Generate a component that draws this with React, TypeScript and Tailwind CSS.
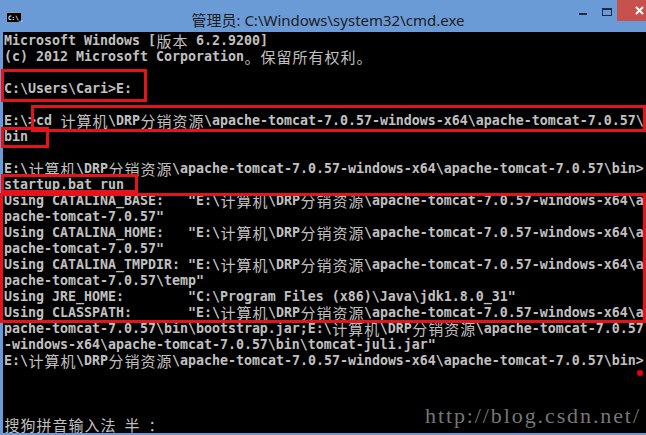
const LINES: string[] = [
  String.raw`Microsoft Windows [版本 6.2.9200]`,
  String.raw`(c) 2012 Microsoft Corporation。保留所有权利。`,
  ``,
  String.raw`C:\Users\Cari>E:`,
  ``,
  String.raw`E:\>cd 计算机\DRP分销资源\apache-tomcat-7.0.57-windows-x64\apache-tomcat-7.0.57` + "\\",
  `bin`,
  ``,
  String.raw`E:\计算机\DRP分销资源\apache-tomcat-7.0.57-windows-x64\apache-tomcat-7.0.57\bin>`,
  `startup.bat run`,
  String.raw`Using CATALINA_BASE:   "E:\计算机\DRP分销资源\apache-tomcat-7.0.57-windows-x64\a`,
  String.raw`pache-tomcat-7.0.57"`,
  String.raw`Using CATALINA_HOME:   "E:\计算机\DRP分销资源\apache-tomcat-7.0.57-windows-x64\a`,
  String.raw`pache-tomcat-7.0.57"`,
  String.raw`Using CATALINA_TMPDIR: "E:\计算机\DRP分销资源\apache-tomcat-7.0.57-windows-x64\a`,
  String.raw`pache-tomcat-7.0.57\temp"`,
  String.raw`Using JRE_HOME:        "C:\Program Files (x86)\Java\jdk1.8.0_31"`,
  String.raw`Using CLASSPATH:       "E:\计算机\DRP分销资源\apache-tomcat-7.0.57-windows-x64\a`,
  String.raw`pache-tomcat-7.0.57\bin\bootstrap.jar;E:\计算机\DRP分销资源\apache-tomcat-7.0.57`,
  String.raw`-windows-x64\apache-tomcat-7.0.57\bin\tomcat-juli.jar"`,
  String.raw`E:\计算机\DRP分销资源\apache-tomcat-7.0.57-windows-x64\apache-tomcat-7.0.57\bin>`,
  ``,
  ``,
  ``,
  `搜狗拼音输入法 半 ：`,
];

// full-width chars take two console cells (16px), the rest one (8px)
const isWide = (ch: string) => ch.charCodeAt(0) > 0x2e7f;

function ConsoleLine({ text }: { text: string }) {
  const runs: { wide: boolean; s: string }[] = [];
  for (const ch of text) {
    const wide = isWide(ch);
    const last = runs[runs.length - 1];
    if (last && last.wide === wide) last.s += ch;
    else runs.push({ wide, s: ch });
  }

  return (
    <div className="flex h-4 items-center whitespace-pre">
      {runs.map((run, i) =>
        run.wide ? (
          Array.from(run.s).map((ch, j) => (
            <span
              key={`${i}-${j}`}
              className="inline-block w-4 text-center font-['Noto_Sans_CJK_SC',sans-serif] text-[15px] leading-4 font-normal text-[#c0c0c0]"
            >
              {ch}
            </span>
          ))
        ) : (
          <span
            key={i}
            className="font-['DejaVu_Sans_Mono',monospace] text-[13.29px] leading-4 font-bold text-[#c0c0c0]"
          >
            {run.s}
          </span>
        )
      )}
    </div>
  );
}

function TitleBar() {
  return (
    <div className="flex h-8 items-start bg-[#6b9bd7]">
      <div className="w-[70px] pt-[12px] pl-[7px]">
        <div className="flex h-[10px] w-[14px] items-center border-t border-[#9a9a9a] bg-black pl-[1px]">
          <span className="font-['DejaVu_Sans_Mono',monospace] text-[6px] leading-none font-bold text-white">C:\_</span>
        </div>
      </div>
      <div className="flex-1 pt-[9px] pl-4 text-center font-['Noto_Sans','Noto_Sans_CJK_SC',sans-serif] text-[15px] leading-[22px] text-[#1c1c1c]">
        管理员: C:\Windows\system32\cmd.exe
      </div>
      <div className="flex w-[76px] items-start">
        <div className="flex h-[21px] w-[26px] items-center justify-center pt-[6px]">
          <div className="h-[2px] w-[8px] bg-[#1d2a44]" />
        </div>
        <div className="flex h-[21px] w-[21px] items-start justify-center pt-[8px]">
          <div className="h-[8px] w-[10px] border border-t-2 border-[#1d2a44]" />
        </div>
        <div className="flex h-[21px] w-[29px] items-center justify-end bg-[#c7514c] pr-[2px]">
          <svg width="9" height="9" viewBox="0 0 9 9">
            <path d="M1 1 L8 8 M8 1 L1 8" stroke="#ffffff" strokeWidth="2" />
          </svg>
        </div>
      </div>
    </div>
  );
}

export default function App() {
  return (
    <div className="relative h-[435px] w-[646px] overflow-hidden bg-[#6b9bd7]">
      <TitleBar />
      <div className="h-[401px] border-l-[3px] border-[#6b9bd7] bg-black pt-[1px] pl-[1px]">
        {LINES.map((line, i) => (
          <ConsoleLine key={i} text={line} />
        ))}
      </div>

      {/* red annotation boxes */}
      <div className="absolute top-[69px] left-[1px] h-[33px] w-[146px] border-[3px] border-[#e3151b]" />
      <div className="absolute top-[105px] left-[31px] h-[27px] w-[615px] border-[3px] border-[#e3151b]" />
      <div className="absolute top-[127px] left-[1px] h-[21px] w-[48px] border-[3px] border-[#e3151b]" />
      <div className="absolute top-[174px] left-[1px] h-[19px] w-[137px] border-[3px] border-[#e3151b]" />
      <div className="absolute top-[193px] left-0 h-[130px] w-[646px] border-[3px] border-[#e3151b]" />
      <div className="absolute top-[370px] left-[637px] h-[6px] w-[6px] rounded-full bg-[#f00000]" />

      <div className="absolute top-[403px] left-[425px] font-['Liberation_Serif',serif] text-[22px] leading-[26px] tracking-[1.9px] text-[#767676]">
        http://blog.csdn.net/
      </div>
    </div>
  );
}
